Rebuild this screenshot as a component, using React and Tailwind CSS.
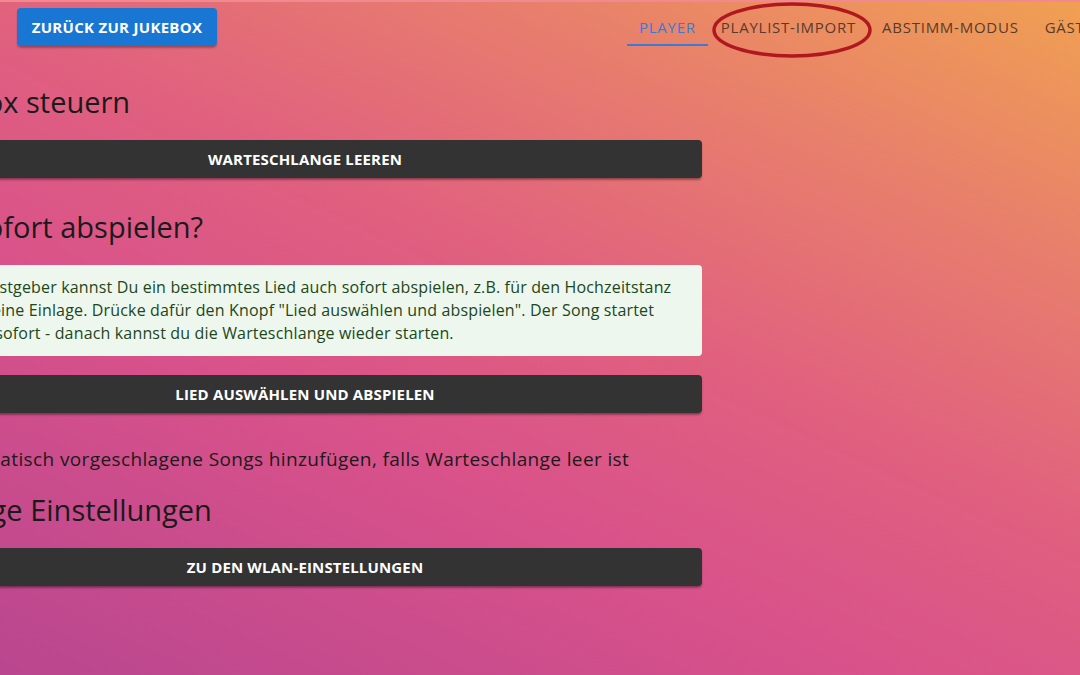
import { Check } from 'lucide-react'

const font = { fontFamily: '"Open Sans", "Liberation Sans", sans-serif' }

function DarkButton({ children }) {
  return (
    <button className="w-full h-[38px] rounded bg-[#333333] text-white text-[15px] font-bold uppercase tracking-[0.01em] shadow-[0_3px_3px_-2px_rgba(0,0,0,0.3),0_2px_2px_0_rgba(0,0,0,0.2)]">
      {children}
    </button>
  )
}

export default function App() {
  return (
    <div
      style={font}
      className="relative w-[1080px] h-[675px] overflow-hidden border-t-2 border-[#f08a90] bg-[linear-gradient(25deg,#b9468f_0%,#d9528a_35%,#e0607f_55%,#e87f6c_78%,#f0a052_100%)]"
    >
      {/* top bar */}
      <div className="flex items-start h-[46px]">
        <button className="shrink-0 whitespace-nowrap ml-[17px] mt-[6px] w-[200px] h-[38px] rounded bg-[#1976d2] text-white text-[15px] font-bold uppercase tracking-[0.02em] shadow-[0_3px_3px_-2px_rgba(0,0,0,0.25),0_2px_2px_0_rgba(0,0,0,0.15)]">
          Zurück zur Jukebox
        </button>
        <nav className="ml-[410px] flex shrink-0 whitespace-nowrap text-[15px] font-medium uppercase tracking-[0.05em]">
          <div className="relative h-[44px] pt-[6px] px-[12px] flex items-center text-[#3a7bd5]">
            Player
            <span className="absolute left-0 right-0 bottom-0 h-[2px] bg-[#3a7bd5]" />
          </div>
          <div className="h-[44px] pt-[6px] px-[13px] flex items-center text-[#5a3a2a]">Playlist-Import</div>
          <div className="h-[44px] pt-[6px] px-[13px] flex items-center text-[#5a3a2a]">Abstimm-Modus</div>
          <div className="h-[44px] pt-[6px] px-[13px] flex items-center text-[#5a3a2a]">Gäste-Modus</div>
        </nav>
      </div>

      {/* red annotation ellipse */}
      <svg className="absolute left-[710px] top-0 w-[170px] h-[60px]" viewBox="0 0 170 60">
        <ellipse cx="82" cy="28" rx="78" ry="26" fill="none" stroke="#b01820" strokeWidth="3.5" />
      </svg>

      {/* content */}
      <div className="ml-[-92px] w-[794px] flex flex-col text-[#1a1a1a]">
        <h2 className="mt-[36px] pl-[3px] text-[29px] leading-[36px]">Jukebox steuern</h2>
        <div className="mt-[20px]">
          <DarkButton>Warteschlange leeren</DarkButton>
        </div>

        <h2 className="mt-[31px] text-[29px] leading-[36px]">Lied sofort abspielen?</h2>
        <div className="mt-[20px] flex rounded bg-[#edf7ed] text-[#1e4620] px-4 py-[11px]">
          <Check className="mt-[2px] mr-[6px] w-[22px] h-[22px] shrink-0 text-[#2e7d32]" />
          <p className="text-[16px] leading-[23px] tracking-[0.01em]">
            Als Gastgeber kannst Du ein bestimmtes Lied auch sofort abspielen, z.B. für den Hochzeitstanz oder eine Einlage.
            Drücke dafür den Knopf "Lied auswählen und abspielen". Der Song startet dann sofort - danach kannst du die
            Warteschlange wieder starten.
          </p>
        </div>
        <div className="mt-[19px]">
          <DarkButton>Lied auswählen und abspielen</DarkButton>
        </div>

        <label className="mt-[32px] flex items-center text-[19px] leading-[28px] tracking-[0.02em]">
          <span className="w-[42px] flex justify-center ml-[-11px]">
            <span className="w-[18px] h-[18px] border-2 border-[#333] rounded-sm" />
          </span>
          Automatisch vorgeschlagene Songs hinzufügen, falls Warteschlange leer ist
        </label>

        <h2 className="mt-[19px] text-[29px] leading-[36px]">Sonstige Einstellungen</h2>
        <div className="mt-[20px]">
          <DarkButton>Zu den WLAN-Einstellungen</DarkButton>
        </div>
      </div>
    </div>
  )
}
